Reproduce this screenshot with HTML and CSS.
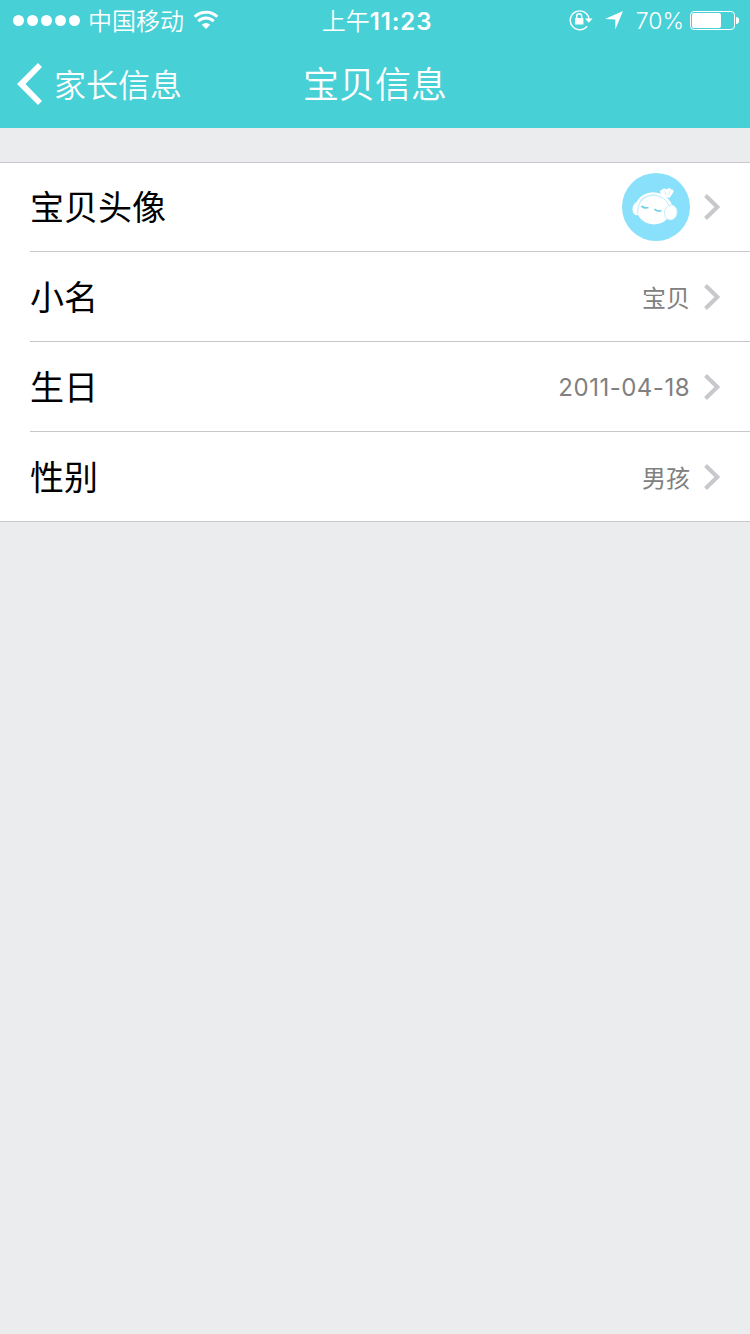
FILE: index.html
```
<!DOCTYPE html>
<html lang="zh-CN">
<head>
    <meta charset="UTF-8">
    <meta name="viewport" content="width=device-width, initial-scale=1.0">
    <title>宝贝信息</title>
    <link rel="stylesheet" href="styles.css">
</head>
<body>
    <header>
        <div class="status-bar">
            <div class="status-left">
                <div class="signal"><i></i><i></i><i></i><i></i><i></i></div>
                <span class="carrier">中国移动</span>
                <svg class="wifi" width="26" height="20" viewBox="0 0 26 20">
                    <path d="M1.7 6.8a16 16 0 0 1 22.6 0" fill="none" stroke="#fff" stroke-width="3"/>
                    <path d="M5.3 11.2a10.8 10.8 0 0 1 15.4 0" fill="none" stroke="#fff" stroke-width="3"/>
                    <path d="M13 19l-4.2-4.3a6 6 0 0 1 8.4 0z" fill="#fff"/>
                </svg>
            </div>
            <div class="status-time">上午<b>11:23</b></div>
            <div class="status-right">
                <svg class="lock" width="24" height="22" viewBox="0 0 24 22">
                    <path d="M18 17.2A9.4 9.4 0 1 1 20 10" fill="none" stroke="#fff" stroke-width="1.4"/>
                    <path d="M16 9.6h7.6l-3.8 4.2z" fill="#fff"/>
                    <rect x="6" y="9" width="8.4" height="6.6" rx=".6" fill="#fff"/>
                    <path d="M7.7 9.4V7.2a2.5 2.5 0 0 1 5 0v2.2" fill="none" stroke="#fff" stroke-width="1.4"/>
                </svg>
                <svg class="location" width="18" height="19" viewBox="0 0 18 19">
                    <path d="M18 0L10.3 18.5V8.6L0 8z" fill="#fff"/>
                </svg>
                <span class="percent">70%</span>
                <div class="battery"><div class="battery-level"></div></div>
                <div class="battery-cap"></div>
            </div>
        </div>
        <nav>
            <a class="back">
                <svg width="25" height="42" viewBox="0 0 25 42">
                    <path d="M0 21L21 0l4 4L8.5 21 25 38l-4 4z" fill="#fff"/>
                </svg>
                <span>家长信息</span>
            </a>
            <h1>宝贝信息</h1>
        </nav>
    </header>

    <ul class="list">
        <li>
            <span class="label">宝贝头像</span>
            <svg class="avatar" width="68" height="68" viewBox="0 0 68 68">
                <circle cx="34" cy="34" r="34" fill="#88e0fa"/>
                <path d="M40 23c-3-4-2-6.500 0-6 1-2 3-2 4.500-.5 2-2 4-1.500 4.500 0 3-.5 3 2 1.500 4l-3 4.500z" fill="#fff"/>
                <path d="M42.500 18l1.500 4M48 17.500l-1 4.500" stroke="#c4effc" stroke-width=".8"/>
                <ellipse cx="15.500" cy="35.500" rx="5" ry="6.800" transform="rotate(12 15.500 35.500)" fill="#fff"/>
                <ellipse cx="32" cy="36.500" rx="17" ry="15" fill="#fff"/>
                <path d="M14.500 33C18 17.500 41 15.500 49 32" fill="none" stroke="#fff" stroke-width="2.200"/>
                <path d="M16 41C13 21 40 15 47 33" fill="none" stroke="#b9ecfb" stroke-width="1"/>
                <ellipse cx="48.800" cy="39.500" rx="6.300" ry="7.600" transform="rotate(12 48.800 39.500)" fill="#fff" stroke="#b9ecfb" stroke-width=".8"/>
                <path d="M19.500 33c2 2 4.500 2.300 7 1.500M32.500 36.200c2 2 4.500 2.300 7 1.300" fill="none" stroke="#6fd3e9" stroke-width="1.800"/>
            </svg>
            <svg class="arrow" width="16" height="26" viewBox="0 0 16 26">
                <path d="M1.500 1.500L13.300 13 1.500 24.500"/>
            </svg>
        </li>
        <li>
            <span class="label">小名</span>
            <span class="value">宝贝</span>
            <svg class="arrow" width="16" height="26" viewBox="0 0 16 26">
                <path d="M1.500 1.500L13.300 13 1.500 24.500"/>
            </svg>
        </li>
        <li>
            <span class="label">生日</span>
            <span class="value date">2011-04-18</span>
            <svg class="arrow" width="16" height="26" viewBox="0 0 16 26">
                <path d="M1.500 1.500L13.300 13 1.500 24.500"/>
            </svg>
        </li>
        <li>
            <span class="label">性别</span>
            <span class="value">男孩</span>
            <svg class="arrow" width="16" height="26" viewBox="0 0 16 26">
                <path d="M1.500 1.500L13.300 13 1.500 24.500"/>
            </svg>
        </li>
    </ul>
</body>
</html>
```
FILE: styles.css
```
* { box-sizing: border-box; }
body { margin: 0; min-height: 1334px; background: #ebecee; font-family: Inter, "Noto Sans CJK SC", sans-serif; font-weight: 400; }
svg { display: block; flex: none; }

header { height: 128px; background: #47d0d6; color: #fff; }

.status-bar { display: grid; grid-template-columns: 1fr auto 1fr; align-items: center; height: 40px; padding: 0 11px 0 13px; font-size: 24px; line-height: 36px; }
.status-left, .status-right { display: flex; align-items: center; height: 40px; }
.status-right { justify-content: flex-end; }
.signal { display: flex; gap: 3px; }
.signal i { width: 11px; height: 11px; border-radius: 50%; background: #fff; }
.carrier { margin-left: 8px; padding-top: 3px; font-weight: 350; }
.wifi { margin-left: 9px; }
.status-time { padding: 3px 0 0 2px; font-weight: 350; }
.status-time b { font-weight: 600; letter-spacing: .9px; }
.location { margin-left: 12px; }
.percent { margin-left: 13px; padding-top: 2px; font-size: 23px; font-weight: 350; }
.battery { width: 45px; height: 19px; margin-left: 6px; padding: 1px; border: 1px solid #fff; border-radius: 4px; }
.battery-level { width: 70%; height: 100%; border-radius: 2px; background: #fff; }
.battery-cap { width: 3px; height: 7px; margin-left: 1px; border-radius: 0 3px 3px 0; background: #fff; }

nav { display: grid; grid-template-columns: 1fr auto 1fr; align-items: center; height: 88px; padding: 0 17px; }
.back { display: flex; align-items: center; gap: 12px; font-size: 32px; font-weight: 350; line-height: 48px; }
.back span { padding-top: 3px; }
h1 { margin: 0; padding-top: 2px; font-size: 36px; font-weight: 350; line-height: 54px; }

.list { margin: 34px 0 0; padding: 0 0 0 30px; list-style: none; background: #fff; border-top: 1px solid #c8c7cc; border-bottom: 1px solid #c8c7cc; }
.list li { display: flex; align-items: center; height: 90px; padding-right: 30px; border-bottom: 1px solid #c8c7cc; }
.list li:first-child { height: 89px; }
.list li:last-child { height: 89px; border-bottom: none; }
.label { flex: 1; padding-top: 2px; color: #000; font-size: 34px; line-height: 50px; }
.value { padding-top: 5px; color: #808080; font-size: 24px; line-height: 36px; }
.date { padding-top: 3px; letter-spacing: .5px; }
.arrow { margin-left: 14px; }
.arrow path { fill: none; stroke: #c7c7cc; stroke-width: 4; }
```
